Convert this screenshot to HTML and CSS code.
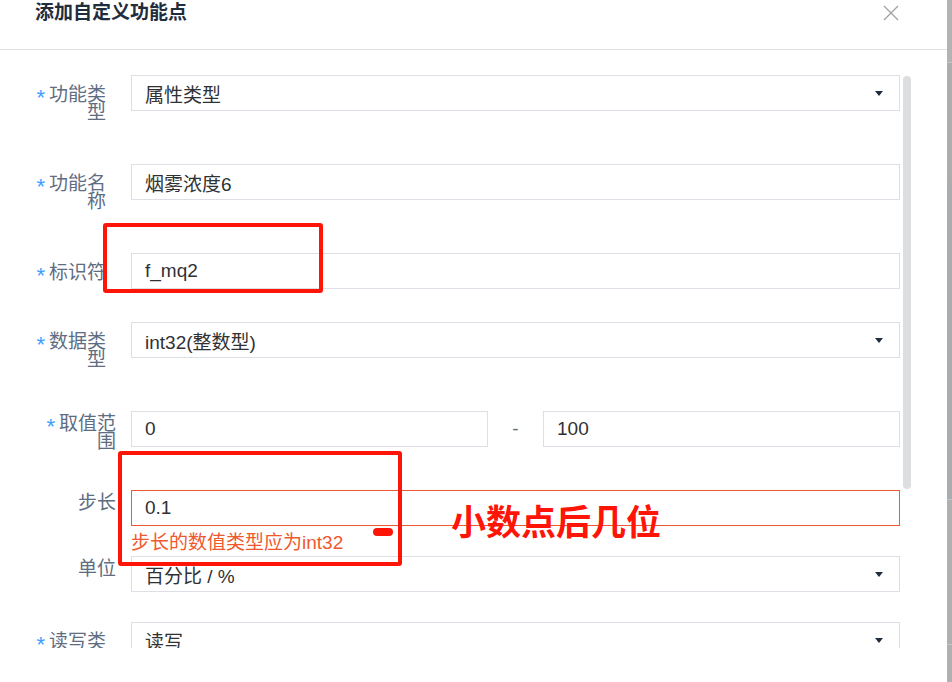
FILE: index.html
```html
<!DOCTYPE html>
<html lang="zh-CN">
<head>
  <meta charset="UTF-8" />
  <meta name="viewport" content="width=device-width, initial-scale=1.0" />
  <title>添加自定义功能点</title>
  <link rel="stylesheet" href="styles.css">
</head>
<body>
  <div class="page">
    <div class="dialog">
      <div class="dialog-header">
        <span class="dialog-title">添加自定义功能点</span>
        <span class="dialog-close">
          <svg width="16" height="16" viewBox="0 0 16 16"><path d="M1 1 L15 15 M15 1 L1 15" stroke="#a0a0a0" stroke-width="1.3" fill="none"/></svg>
        </span>
      </div>

      <div class="dialog-body">
        <div class="form">
          <div class="form-item">
            <label class="form-label wrap"><span class="required">*</span>功能类型</label>
            <div class="form-control">
              <div class="select">属性类型<span class="caret"></span></div>
            </div>
          </div>

          <div class="form-item">
            <label class="form-label wrap"><span class="required">*</span>功能名称</label>
            <div class="form-control">
              <input class="input" type="text" value="烟雾浓度6">
            </div>
          </div>

          <div class="form-item">
            <label class="form-label"><span class="required">*</span>标识符</label>
            <div class="form-control">
              <input class="input" type="text" value="f_mq2">
            </div>
          </div>

          <div class="form-item">
            <label class="form-label wrap"><span class="required">*</span>数据类型</label>
            <div class="form-control">
              <div class="select">int32(整数型)<span class="caret"></span></div>
            </div>
          </div>

          <div class="form-item compact">
            <label class="form-label wrap"><span class="required">*</span>取值范围</label>
            <div class="form-control range">
              <input class="input" type="text" value="0">
              <span class="range-sep">-</span>
              <input class="input" type="text" value="100">
            </div>
          </div>

          <div class="form-item compact no-gap">
            <label class="form-label">步长</label>
            <div class="form-control">
              <input class="input is-error" type="text" value="0.1">
              <div class="form-error">步长的数值类型应为int32</div>
            </div>
          </div>

          <div class="form-item compact">
            <label class="form-label">单位</label>
            <div class="form-control">
              <div class="select">百分比 / %<span class="caret"></span></div>
            </div>
          </div>

          <div class="form-item">
            <label class="form-label wrap"><span class="required">*</span>读写类型</label>
            <div class="form-control">
              <div class="select">读写<span class="caret"></span></div>
            </div>
          </div>
        </div>
      </div>

      <div class="dialog-footer"></div>

      <div class="scroll-thumb"></div>

      <!-- 标注 -->
      <div class="mark mark-id"></div>
      <div class="mark mark-step"></div>
      <div class="mark-dash"></div>
      <div class="mark-note">小数点后几位</div>
    </div>
    <div class="page-scrollbar"></div>
  </div>
</body>
</html>
```

FILE: styles.css
```css
html, body {
  margin: 0;
  height: 100%;
}

body {
  font-family: "Liberation Sans", "Noto Sans CJK SC", sans-serif;
  font-size: 19px;
  background: #fff;
}

.page {
  display: flex;
  height: 682px;
  overflow: hidden;
}

.dialog {
  position: relative;
  flex: 1;
  display: flex;
  flex-direction: column;
  background: #fff;
}

.dialog-header {
  height: 50px;
  box-sizing: border-box;
  border-bottom: 1px solid #dfe1e6;
  display: flex;
  justify-content: space-between;
  align-items: flex-start;
  padding: 0 48px 0 35px;
}

.dialog-title {
  font-weight: 700;
  line-height: 26px;
  color: #1f2d3d;
}

.dialog-close {
  display: block;
  width: 16px;
  height: 16px;
  margin-top: 5px;
}

.dialog-close svg {
  display: block;
}

.dialog-body {
  height: 598px;
  overflow: hidden;
}

.dialog-footer {
  flex: 1;
}

.form {
  padding: 25px 47px 0 0;
}

.form-item {
  display: flex;
  align-items: flex-start;
  margin-bottom: 33px;
}

.form-item.compact {
  margin-bottom: 30px;
}

.form-item.no-gap {
  margin-bottom: 0;
}

.form-label {
  flex: 0 0 131px;
  box-sizing: border-box;
  padding: 11px 25px 0 30px;
  text-align: right;
  line-height: 18px;
  color: #5e6d82;
}

.form-label.wrap {
  padding-bottom: 9px;
}

.compact .form-label {
  padding-top: 4px;
  padding-right: 15px;
}

.required {
  font-size: 22px;
  line-height: 0;
  vertical-align: -4px;
  color: #409eff;
  margin-right: 4px;
}

.form-control {
  flex: 1;
  min-width: 0;
}

.input,
.select {
  display: flex;
  align-items: center;
  width: 100%;
  height: 36px;
  box-sizing: border-box;
  border: 1px solid #dcdfe6;
  padding: 0 13px;
  font: inherit;
  color: #303133;
  background: #fff;
  outline: none;
}

.input.is-error {
  border-color: #f0582f;
}

.select {
  justify-content: space-between;
  padding-right: 16px;
}

.caret {
  width: 0;
  height: 0;
  border-left: 4.5px solid transparent;
  border-right: 4.5px solid transparent;
  border-top: 5px solid #1f2d3d;
}

.range {
  display: grid;
  grid-template-columns: 1fr 55px 1fr;
  align-items: center;
}

.range-sep {
  text-align: center;
  color: #5e6d82;
}

.form-error {
  padding-top: 4px;
  line-height: 26px;
  color: #f0582f;
}

.scroll-thumb {
  position: absolute;
  left: 903px;
  top: 76px;
  width: 8px;
  height: 413px;
  border-radius: 4px;
  background: #dddee0;
}

.page-scrollbar {
  flex: 0 0 5px;
  background: linear-gradient(#b3b3b3 0 62px, #c6c6c6 62px 63px, #adadad 63px 183px, #a9adb0 183px 499px, #c4c4c4 499px 500px, #b0b0b0 500px 644px, #c4c4c4 644px 645px, #b0b0b0 645px);
}

/* 红色标注 */
.mark {
  position: absolute;
  border: 4px solid #ff1408;
  border-radius: 3px;
  box-sizing: border-box;
}

.mark-id {
  left: 103px;
  top: 223px;
  width: 220px;
  height: 70px;
}

.mark-step {
  left: 118px;
  top: 451px;
  width: 284px;
  height: 115px;
}

.mark-dash {
  position: absolute;
  left: 373px;
  top: 528px;
  width: 20px;
  height: 8px;
  border-radius: 4px;
  background: #ff1408;
}

.mark-note {
  position: absolute;
  left: 451px;
  top: 505px;
  font-size: 35px;
  line-height: 35px;
  font-weight: 700;
  color: #ff1408;
}
```
